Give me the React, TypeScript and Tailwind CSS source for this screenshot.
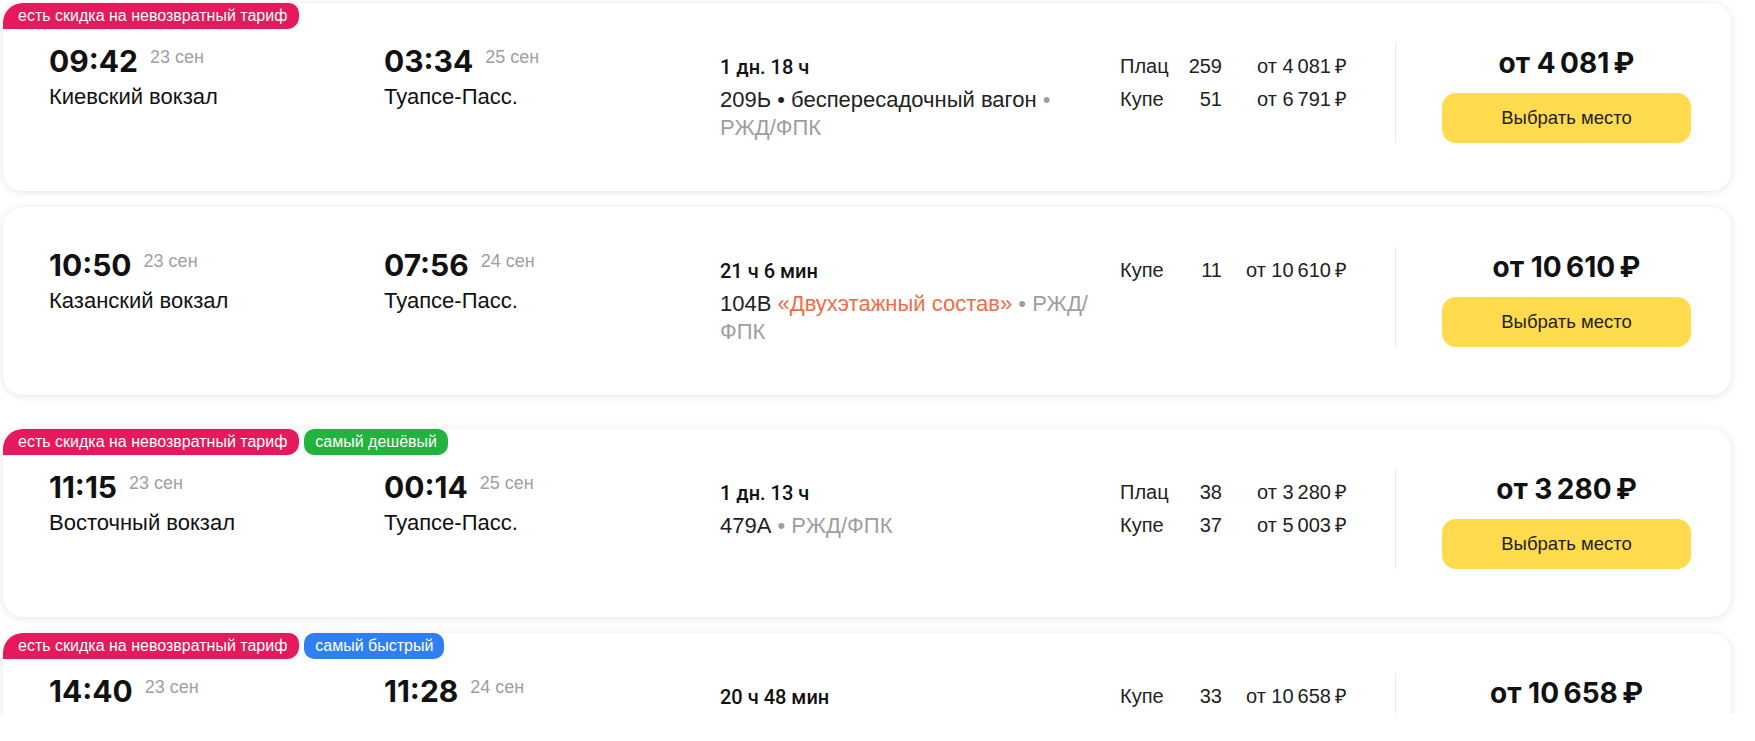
import type { ReactNode } from 'react';

type BadgeKind = 'discount' | 'cheap' | 'fast';

interface Fare {
  cls: string;
  seats: string;
  price: string;
}

interface Trip {
  badges: { text: string; kind: BadgeKind }[];
  depTime: string;
  depDate: string;
  depStation: string;
  arrTime: string;
  arrDate: string;
  arrStation: string;
  duration: string;
  info: ReactNode;
  fares: Fare[];
  minPrice: string;
  gap: string;
}

const badgeStyle: Record<BadgeKind, string> = {
  discount: 'bg-[#e6195c] rounded-tl-[20px] rounded-tr-[10px] rounded-br-[12px] pl-[15px] pr-[12px]',
  cheap: 'bg-[#21b33e] rounded-[10px] px-[11px]',
  fast: 'bg-[#2f7ff2] rounded-[10px] px-[11px]',
};

const dot = <span className="text-[#9e9e9e]"> • </span>;

const trips: Trip[] = [
  {
    badges: [{ text: 'есть скидка на невозвратный тариф', kind: 'discount' }],
    depTime: '09:42',
    depDate: '23 сен',
    depStation: 'Киевский вокзал',
    arrTime: '03:34',
    arrDate: '25 сен',
    arrStation: 'Туапсе-Пасс.',
    duration: '1 дн. 18 ч',
    info: (
      <>
        209Ь • беспересадочный вагон{dot}
        <span className="text-[#9e9e9e]">
          РЖД/<wbr />ФПК
        </span>
      </>
    ),
    fares: [
      { cls: 'Плац', seats: '259', price: 'от 4\u2009081\u2009₽' },
      { cls: 'Купе', seats: '51', price: 'от 6\u2009791\u2009₽' },
    ],
    minPrice: 'от 4\u2009081\u2009₽',
    gap: 'mt-0',
  },
  {
    badges: [],
    depTime: '10:50',
    depDate: '23 сен',
    depStation: 'Казанский вокзал',
    arrTime: '07:56',
    arrDate: '24 сен',
    arrStation: 'Туапсе-Пасс.',
    duration: '21 ч 6 мин',
    info: (
      <>
        104В <span className="text-[#f26b47]">«Двухэтажный состав»</span>
        {dot}
        <span className="text-[#9e9e9e]">
          РЖД/<wbr />ФПК
        </span>
      </>
    ),
    fares: [{ cls: 'Купе', seats: '11', price: 'от 10\u2009610\u2009₽' }],
    minPrice: 'от 10\u2009610\u2009₽',
    gap: 'mt-[16px]',
  },
  {
    badges: [
      { text: 'есть скидка на невозвратный тариф', kind: 'discount' },
      { text: 'самый дешёвый', kind: 'cheap' },
    ],
    depTime: '11:15',
    depDate: '23 сен',
    depStation: 'Восточный вокзал',
    arrTime: '00:14',
    arrDate: '25 сен',
    arrStation: 'Туапсе-Пасс.',
    duration: '1 дн. 13 ч',
    info: (
      <>
        479А{dot}
        <span className="text-[#9e9e9e]">
          РЖД/<wbr />ФПК
        </span>
      </>
    ),
    fares: [
      { cls: 'Плац', seats: '38', price: 'от 3\u2009280\u2009₽' },
      { cls: 'Купе', seats: '37', price: 'от 5\u2009003\u2009₽' },
    ],
    minPrice: 'от 3\u2009280\u2009₽',
    gap: 'mt-[34px]',
  },
  {
    badges: [
      { text: 'есть скидка на невозвратный тариф', kind: 'discount' },
      { text: 'самый быстрый', kind: 'fast' },
    ],
    depTime: '14:40',
    depDate: '23 сен',
    depStation: '',
    arrTime: '11:28',
    arrDate: '24 сен',
    arrStation: '',
    duration: '20 ч 48 мин',
    info: null,
    fares: [{ cls: 'Купе', seats: '33', price: 'от 10\u2009658\u2009₽' }],
    minPrice: 'от 10\u2009658\u2009₽',
    gap: 'mt-[16px]',
  },
];

function TimePoint({ time, date, station }: { time: string; date: string; station: string }) {
  return (
    <div>
      <div className="flex items-start">
        <span className="font-['Inter',sans-serif] text-[30px] font-bold leading-[36px] text-[#111]">
          {time}
        </span>
        <span className="ml-[12px] mt-[3px] text-[18px] leading-[22px] text-[#a0a0a0]">{date}</span>
      </div>
      <div className="mt-[4px] h-[28px] text-[22px] leading-[28px] text-[#111]">{station}</div>
    </div>
  );
}

function TripCard({ trip }: { trip: Trip }) {
  return (
    <div
      className={`relative ml-[3px] h-[188px] w-[1728px] shrink-0 rounded-[20px] bg-white shadow-[0_1px_8px_rgba(0,0,0,0.11)] ${trip.gap}`}
    >
      {trip.badges.length > 0 && (
        <div className="absolute left-0 top-0 flex gap-[5px]">
          {trip.badges.map((b) => (
            <span
              key={b.text}
              className={`flex h-[26px] items-center text-[16px] leading-none text-white ${badgeStyle[b.kind]}`}
            >
              {b.text}
            </span>
          ))}
        </div>
      )}

      <div className="flex pl-[46px] pr-[40px] pt-[40px]">
        <div className="w-[335px] shrink-0">
          <TimePoint time={trip.depTime} date={trip.depDate} station={trip.depStation} />
        </div>
        <div className="w-[336px] shrink-0">
          <TimePoint time={trip.arrTime} date={trip.arrDate} station={trip.arrStation} />
        </div>

        <div className="w-[400px] shrink-0 pt-[10px]">
          <div className="font-['Roboto',sans-serif] text-[20px] font-medium leading-[28px] text-[#111]">
            {trip.duration}
          </div>
          <div className="mt-[5px] max-w-[378px] text-[22px] leading-[28px] text-[#222]">{trip.info}</div>
        </div>

        <div className="w-[275px] shrink-0 pt-[7px] text-[20px] leading-[33px] text-[#222]">
          {trip.fares.map((f) => (
            <div key={f.cls} className="flex">
              <span className="w-[64px]">{f.cls}</span>
              <span className="w-[38px] text-right">{f.seats}</span>
              <span className="w-[125px] text-right">{f.price}</span>
            </div>
          ))}
        </div>

        <div className="h-[100px] w-px shrink-0 bg-[#ebebeb]" />

        <div className="ml-[46px] flex w-[249px] shrink-0 flex-col items-center pt-[3px]">
          <div className="font-['Inter',sans-serif] text-[28px] font-bold leading-[34px] text-[#111]">
            {trip.minPrice}
          </div>
          <button className="mt-[13px] h-[50px] w-[249px] rounded-[14px] bg-[#ffdb4d] text-[18.5px] text-[#222]">
            Выбрать место
          </button>
        </div>
      </div>
    </div>
  );
}

export default function App() {
  return (
    <div className="h-[741px] w-[1755px] overflow-hidden bg-white font-['Liberation_Sans',Arial,sans-serif]">
      <div className="flex h-[714px] flex-col overflow-hidden pt-[3px]">
        {trips.map((t) => (
          <TripCard key={t.depTime} trip={t} />
        ))}
      </div>
    </div>
  );
}
